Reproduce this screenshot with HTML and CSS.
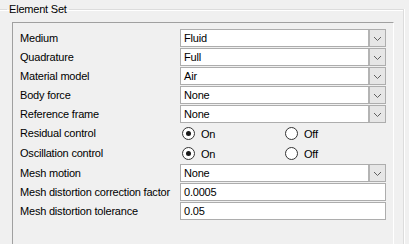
FILE: index.html
```html
<!DOCTYPE html>
<html lang="en">
  <head>
    <meta charset="UTF-8" />
    <title>Element Set</title>
    <link rel="stylesheet" href="styles.css">
  </head>
  <body>
    <fieldset class="group">
      <legend>Element Set</legend>
      <div class="panel">
        <div class="form">
          <label>Medium</label>
          <div class="combo"><span class="value">Fluid</span><span class="drop"><svg width="9" height="6" viewBox="0 0 9 6"><polyline points="1,1 4.5,4.5 8,1" fill="none" stroke="#606060" stroke-width="1"/></svg></span></div>

          <label>Quadrature</label>
          <div class="combo"><span class="value">Full</span><span class="drop"><svg width="9" height="6" viewBox="0 0 9 6"><polyline points="1,1 4.5,4.5 8,1" fill="none" stroke="#606060" stroke-width="1"/></svg></span></div>

          <label>Material model</label>
          <div class="combo"><span class="value">Air</span><span class="drop"><svg width="9" height="6" viewBox="0 0 9 6"><polyline points="1,1 4.5,4.5 8,1" fill="none" stroke="#606060" stroke-width="1"/></svg></span></div>

          <label>Body force</label>
          <div class="combo"><span class="value">None</span><span class="drop"><svg width="9" height="6" viewBox="0 0 9 6"><polyline points="1,1 4.5,4.5 8,1" fill="none" stroke="#606060" stroke-width="1"/></svg></span></div>

          <label>Reference frame</label>
          <div class="combo"><span class="value">None</span><span class="drop"><svg width="9" height="6" viewBox="0 0 9 6"><polyline points="1,1 4.5,4.5 8,1" fill="none" stroke="#606060" stroke-width="1"/></svg></span></div>

          <label class="tall">Residual control</label>
          <div class="radios">
            <span class="option"><span class="radio checked"></span>On</span>
            <span class="option"><span class="radio"></span>Off</span>
          </div>

          <label class="tall">Oscillation control</label>
          <div class="radios">
            <span class="option"><span class="radio checked"></span>On</span>
            <span class="option"><span class="radio"></span>Off</span>
          </div>

          <label>Mesh motion</label>
          <div class="combo"><span class="value">None</span><span class="drop"><svg width="9" height="6" viewBox="0 0 9 6"><polyline points="1,1 4.5,4.5 8,1" fill="none" stroke="#606060" stroke-width="1"/></svg></span></div>

          <label>Mesh distortion correction factor</label>
          <div class="field">0.0005</div>

          <label>Mesh distortion tolerance</label>
          <div class="field">0.05</div>
        </div>
      </div>
    </fieldset>
  </body>
</html>
```

FILE: styles.css
```css
html,
body {
  margin: 0;
  padding: 0;
  background: #f0f0f0;
  overflow: hidden;
}
body {
  font-family: "Liberation Sans", Arial, sans-serif;
  font-size: 11px;
  letter-spacing: -0.2px;
  color: #000;
  height: 244px;
}
.group {
  box-sizing: border-box;
  width: 404px;
  height: 241px;
  margin: 3px 0 0 0;
  padding: 0 0 0 7px;
  border: 1px solid #dcdcdc;
  border-left: none;
  border-bottom: none;
  box-shadow: 1px 0 0 #fff, inset 0 1px 0 #fff;
}
.group legend {
  padding: 0 2px;
  line-height: 13px;
}
.panel {
  box-sizing: border-box;
  margin: 6px 0 0 5px;
  width: 382px;
  height: 222px;
  border-top: 1px solid #a0a0a0;
  border-left: 1px solid #a0a0a0;
  border-right: 1px solid #fff;
  padding: 6px 0 0 7px;
}
.form {
  display: grid;
  grid-template-columns: 160px 206px;
  row-gap: 1px;
}
.form label {
  height: 18px;
  line-height: 18px;
  white-space: nowrap;
}
.form label.tall {
  height: 19px;
  line-height: 19px;
}
.combo,
.field {
  box-sizing: border-box;
  height: 18px;
  border: 1px solid #adadad;
  background: #fff;
  display: flex;
  align-items: center;
}
.combo .value,
.field {
  padding-left: 3px;
  line-height: 16px;
}
.combo .value {
  flex: 1;
}
.drop {
  box-sizing: border-box;
  width: 17px;
  height: 16px;
  background: #e6e6e6;
  border-left: 2px solid #b4b4b4;
  display: flex;
  align-items: center;
  justify-content: center;
  padding-top: 1px;
}
.radios {
  height: 19px;
  display: grid;
  grid-template-columns: 103px 103px;
  align-items: center;
}
.option {
  display: flex;
  align-items: center;
  gap: 6px;
  padding-left: 2px;
}
.radio {
  box-sizing: border-box;
  width: 13px;
  height: 13px;
  border: 1px solid #333;
  border-radius: 50%;
  background: #fff;
  display: flex;
  align-items: center;
  justify-content: center;
}
.radio.checked::after {
  content: "";
  width: 5px;
  height: 5px;
  border-radius: 50%;
  background: #1a1a1a;
}
```
